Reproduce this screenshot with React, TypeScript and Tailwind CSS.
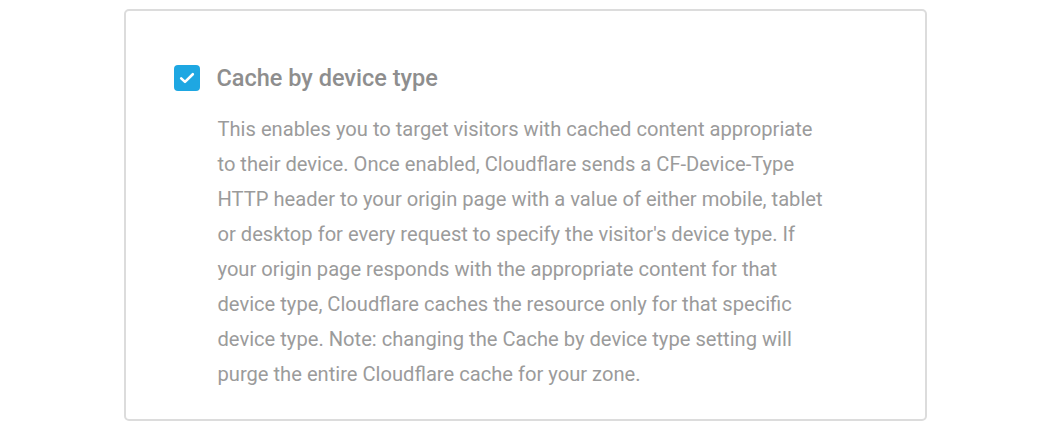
import React from "react";

export default function App() {
  return (
    <div className="w-[1050px] h-[429px] bg-white pt-[9px]" style={{ fontFamily: "Roboto, 'Liberation Sans', sans-serif" }}>
      <div className="mx-auto w-[803px] h-[412px] rounded-[5px] border-2 border-[#dcdcdc] bg-white pl-[48px] pt-[53px]">
        <div className="flex items-center">
          <div className="w-[26px] h-[26px] rounded-[4px] bg-[#1ea7e2]">
            <svg width="26" height="26" viewBox="0 0 26 26" fill="none">
              <path d="M7.2 13.4 L11 16.9 L18.8 9.2" stroke="white" strokeWidth="2.6" strokeLinecap="round" strokeLinejoin="round" />
            </svg>
          </div>
          <div className="ml-[17px] text-[23.5px] font-medium text-[#8e8e8e] leading-[28px]">Cache by device type</div>
        </div>
        <p className="ml-[44px] mt-[20px] w-[614px] text-[20.15px] leading-[35px] text-[#9b9b9b]">
          This enables you to target visitors with cached content appropriate to their device. Once enabled, Cloudflare sends a CF-Device-Type HTTP header to your origin page with a value of either mobile, tablet or desktop for every request to specify the visitor's device type. If your origin page responds with the appropriate content for that device type, Cloudflare caches the resource only for that specific device type. Note: changing the Cache by device type setting will purge the entire Cloudflare cache for your zone.
        </p>
      </div>
    </div>
  );
}
